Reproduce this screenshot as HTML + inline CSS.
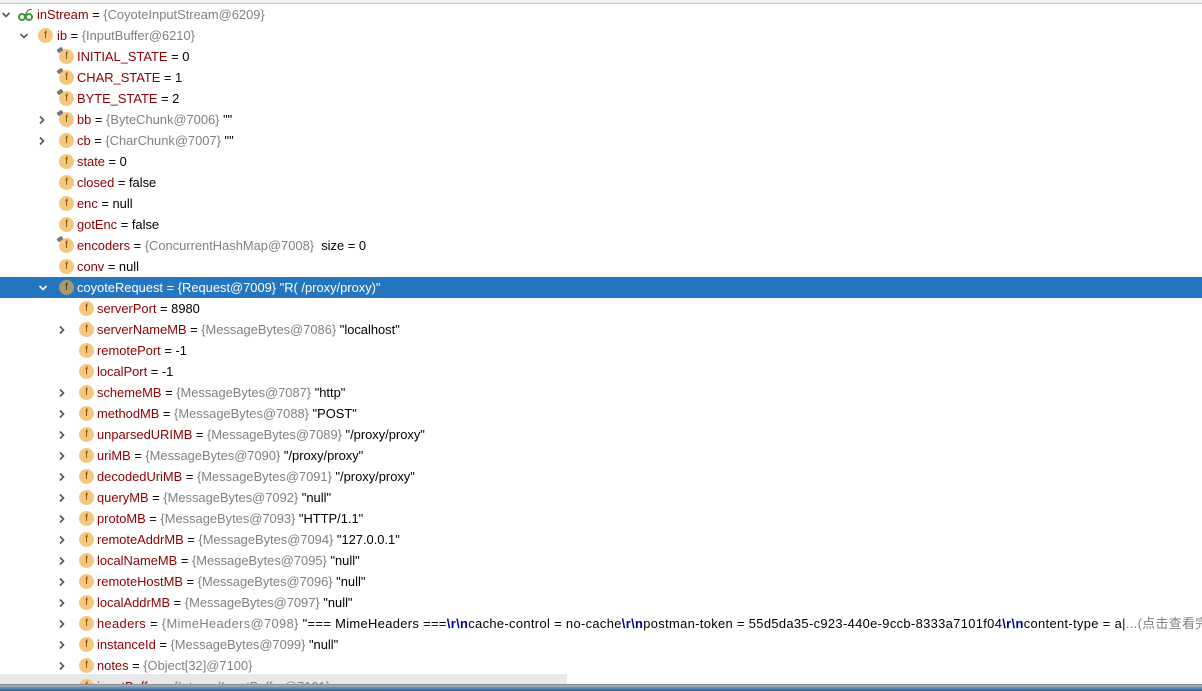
<!DOCTYPE html>
<html><head><meta charset="utf-8"><style>
body{margin:0;width:1202px;height:690px;overflow:hidden;background:#fff;font-family:"Liberation Sans","Noto Sans CJK SC",sans-serif;font-size:12.9px;position:relative}
.top{position:absolute;left:0;top:0;width:1202px;height:3px;background:#f0f0f0;border-bottom:1px solid #c8c8c8}
.r{position:absolute;left:0;width:1202px;height:21px;line-height:22px;white-space:nowrap}
.r.sel{background:#2675bf;color:#fff}
.n{color:#8b0000}
.g{color:#808080}
.sel .n,.sel .g{color:#fff}
.ar{position:absolute;top:6px;width:10px;height:10px}
.ic{position:absolute;top:3px;width:15px;height:15px;border-radius:50%;background:#f5c77e;color:#7a4a00;font-size:10px;line-height:15px;text-align:center}
.sel .ic{background:#a89a6a;color:#333}
.pin:before{content:"";position:absolute;left:-2px;top:-1px;width:6px;height:4px;background:#777;transform:rotate(-35deg);border-radius:1px}
.t{position:absolute;top:0}
.b{color:#00008b;font-weight:bold}
.bot{position:absolute;left:0;top:674px;width:567px;height:10px;background:#e8e8e8;overflow:hidden}
.task{position:absolute;left:0;top:684px;width:1202px;height:6px;background:linear-gradient(#a7b8cb,#2d5c8c);border-top:1px solid #8a8a8a}
</style></head><body>
<svg width="0" height="0" style="position:absolute"><defs>
<symbol id="dn" viewBox="0 0 10 10"><path d="M1.5 3 L5 6.5 L8.5 3" fill="none" stroke="#555" stroke-width="1.6"/></symbol>
<symbol id="dw" viewBox="0 0 10 10"><path d="M1.5 3 L5 6.5 L8.5 3" fill="none" stroke="#fff" stroke-width="1.6"/></symbol>
<symbol id="rt" viewBox="0 0 10 10"><path d="M3 1.5 L6.5 5 L3 8.5" fill="none" stroke="#555" stroke-width="1.6"/></symbol>
</defs></svg>
<div class="top"></div>
<div class="r" style="top:4px"><svg class="ar" style="left:1px"><use href="#dn"/></svg><svg style="position:absolute;left:18px;top:5px" width="16" height="12" viewBox="0 0 16 12"><circle cx="4" cy="8" r="3" fill="none" stroke="#3a9a3a" stroke-width="2"/><circle cx="11" cy="8" r="3" fill="none" stroke="#3a9a3a" stroke-width="2"/><path d="M7 6 L10 1 L14 0" stroke="#555" fill="none"/></svg><span class="t" style="left:37px"><span class="n">inStream</span> = <span class="g">{CoyoteInputStream@6209}</span></span></div>
<div class="r" style="top:25px"><svg class="ar" style="left:19px"><use href="#dn"/></svg><span class="ic" style="left:38px">f</span><span class="t" style="left:57px"><span class="n">ib</span> = <span class="g">{InputBuffer@6210}</span></span></div>
<div class="r" style="top:46px"><span class="ic pin" style="left:59px">f</span><span class="t" style="left:77px"><span class="n">INITIAL_STATE</span> = 0</span></div>
<div class="r" style="top:67px"><span class="ic pin" style="left:59px">f</span><span class="t" style="left:77px"><span class="n">CHAR_STATE</span> = 1</span></div>
<div class="r" style="top:88px"><span class="ic pin" style="left:59px">f</span><span class="t" style="left:77px"><span class="n">BYTE_STATE</span> = 2</span></div>
<div class="r" style="top:109px"><svg class="ar" style="left:37px"><use href="#rt"/></svg><span class="ic pin" style="left:59px">f</span><span class="t" style="left:77px"><span class="n">bb</span> = <span class="g">{ByteChunk@7006}</span> ""</span></div>
<div class="r" style="top:130px"><svg class="ar" style="left:37px"><use href="#rt"/></svg><span class="ic" style="left:59px">f</span><span class="t" style="left:77px"><span class="n">cb</span> = <span class="g">{CharChunk@7007}</span> ""</span></div>
<div class="r" style="top:151px"><span class="ic" style="left:59px">f</span><span class="t" style="left:77px"><span class="n">state</span> = 0</span></div>
<div class="r" style="top:172px"><span class="ic" style="left:59px">f</span><span class="t" style="left:77px"><span class="n">closed</span> = false</span></div>
<div class="r" style="top:193px"><span class="ic" style="left:59px">f</span><span class="t" style="left:77px"><span class="n">enc</span> = null</span></div>
<div class="r" style="top:214px"><span class="ic" style="left:59px">f</span><span class="t" style="left:77px"><span class="n">gotEnc</span> = false</span></div>
<div class="r" style="top:235px"><span class="ic pin" style="left:59px">f</span><span class="t" style="left:77px"><span class="n">encoders</span> = <span class="g">{ConcurrentHashMap@7008}</span>&nbsp; size = 0</span></div>
<div class="r" style="top:256px"><span class="ic" style="left:59px">f</span><span class="t" style="left:77px"><span class="n">conv</span> = null</span></div>
<div class="r sel" style="top:277px"><svg class="ar" style="left:38px"><use href="#dw"/></svg><span class="ic" style="left:59px">f</span><span class="t" style="left:77px"><span class="n">coyoteRequest</span> = <span class="g">{Request@7009}</span> "R( /proxy/proxy)"</span></div>
<div class="r" style="top:298px"><span class="ic" style="left:79px">f</span><span class="t" style="left:97px"><span class="n">serverPort</span> = 8980</span></div>
<div class="r" style="top:319px"><svg class="ar" style="left:57px"><use href="#rt"/></svg><span class="ic" style="left:79px">f</span><span class="t" style="left:97px"><span class="n">serverNameMB</span> = <span class="g">{MessageBytes@7086}</span> "localhost"</span></div>
<div class="r" style="top:340px"><span class="ic" style="left:79px">f</span><span class="t" style="left:97px"><span class="n">remotePort</span> = -1</span></div>
<div class="r" style="top:361px"><span class="ic" style="left:79px">f</span><span class="t" style="left:97px"><span class="n">localPort</span> = -1</span></div>
<div class="r" style="top:382px"><svg class="ar" style="left:57px"><use href="#rt"/></svg><span class="ic" style="left:79px">f</span><span class="t" style="left:97px"><span class="n">schemeMB</span> = <span class="g">{MessageBytes@7087}</span> "http"</span></div>
<div class="r" style="top:403px"><svg class="ar" style="left:57px"><use href="#rt"/></svg><span class="ic" style="left:79px">f</span><span class="t" style="left:97px"><span class="n">methodMB</span> = <span class="g">{MessageBytes@7088}</span> "POST"</span></div>
<div class="r" style="top:424px"><svg class="ar" style="left:57px"><use href="#rt"/></svg><span class="ic" style="left:79px">f</span><span class="t" style="left:97px"><span class="n">unparsedURIMB</span> = <span class="g">{MessageBytes@7089}</span> "/proxy/proxy"</span></div>
<div class="r" style="top:445px"><svg class="ar" style="left:57px"><use href="#rt"/></svg><span class="ic" style="left:79px">f</span><span class="t" style="left:97px"><span class="n">uriMB</span> = <span class="g">{MessageBytes@7090}</span> "/proxy/proxy"</span></div>
<div class="r" style="top:466px"><svg class="ar" style="left:57px"><use href="#rt"/></svg><span class="ic" style="left:79px">f</span><span class="t" style="left:97px"><span class="n">decodedUriMB</span> = <span class="g">{MessageBytes@7091}</span> "/proxy/proxy"</span></div>
<div class="r" style="top:487px"><svg class="ar" style="left:57px"><use href="#rt"/></svg><span class="ic" style="left:79px">f</span><span class="t" style="left:97px"><span class="n">queryMB</span> = <span class="g">{MessageBytes@7092}</span> "null"</span></div>
<div class="r" style="top:508px"><svg class="ar" style="left:57px"><use href="#rt"/></svg><span class="ic" style="left:79px">f</span><span class="t" style="left:97px"><span class="n">protoMB</span> = <span class="g">{MessageBytes@7093}</span> "HTTP/1.1"</span></div>
<div class="r" style="top:529px"><svg class="ar" style="left:57px"><use href="#rt"/></svg><span class="ic" style="left:79px">f</span><span class="t" style="left:97px"><span class="n">remoteAddrMB</span> = <span class="g">{MessageBytes@7094}</span> "127.0.0.1"</span></div>
<div class="r" style="top:550px"><svg class="ar" style="left:57px"><use href="#rt"/></svg><span class="ic" style="left:79px">f</span><span class="t" style="left:97px"><span class="n">localNameMB</span> = <span class="g">{MessageBytes@7095}</span> "null"</span></div>
<div class="r" style="top:571px"><svg class="ar" style="left:57px"><use href="#rt"/></svg><span class="ic" style="left:79px">f</span><span class="t" style="left:97px"><span class="n">remoteHostMB</span> = <span class="g">{MessageBytes@7096}</span> "null"</span></div>
<div class="r" style="top:592px"><svg class="ar" style="left:57px"><use href="#rt"/></svg><span class="ic" style="left:79px">f</span><span class="t" style="left:97px"><span class="n">localAddrMB</span> = <span class="g">{MessageBytes@7097}</span> "null"</span></div>
<div class="r" style="top:613px"><svg class="ar" style="left:57px"><use href="#rt"/></svg><span class="ic" style="left:79px">f</span><span class="t" style="left:97px;letter-spacing:0.35px"><span class="n">headers</span> = <span class="g">{MimeHeaders@7098}</span> "=== MimeHeaders ===<span class="b">\r\n</span>cache-control = no-cache<span class="b">\r\n</span>postman-token = 55d5da35-c923-440e-9ccb-8333a7101f04<span class="b">\r\n</span>content-type = a|<span class="g">...(点击查看完整</span></span></div>
<div class="r" style="top:634px"><svg class="ar" style="left:57px"><use href="#rt"/></svg><span class="ic" style="left:79px">f</span><span class="t" style="left:97px"><span class="n">instanceId</span> = <span class="g">{MessageBytes@7099}</span> "null"</span></div>
<div class="r" style="top:655px"><svg class="ar" style="left:57px"><use href="#rt"/></svg><span class="ic" style="left:79px">f</span><span class="t" style="left:97px"><span class="n">notes</span> = <span class="g">{Object[32]@7100}</span></span></div>
<div class="bot"><div class="r" style="top:2px;width:567px"><span class="ic" style="left:79px">f</span><span class="t" style="left:97px"><span class="n">inputBuffer</span> = <span class="g">{InternalInputBuffer@7101}</span></span></div></div>
<div class="task"></div>
</body></html>
